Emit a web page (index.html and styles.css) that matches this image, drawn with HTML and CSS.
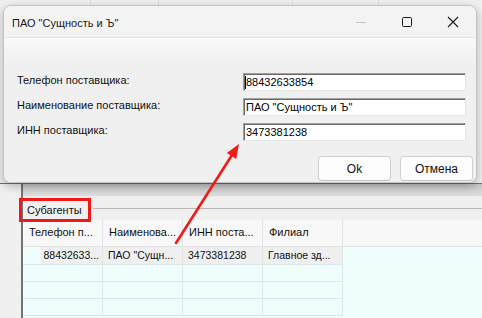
FILE: index.html
```html
<!DOCTYPE html>
<html lang="ru">
<head>
    <meta charset="UTF-8">
    <title>ПАО "Сущность и Ъ"</title>
    <link rel="stylesheet" href="styles.css">
</head>
<body>
    <div class="app">
        <div class="app-top">
            <div class="top-col w90"></div>
            <div class="top-col w67"></div>
            <div class="top-col w133"></div>
            <div class="top-col w85"></div>
            <div class="top-col rest"></div>
        </div>
        <div class="app-lower">
            <div class="side"></div>
            <div class="main">
                <div class="band"></div>
                <div class="tabs">
                    <span class="tab-caption">Субагенты</span>
                    <span class="tab-line"></span>
                </div>
                <div class="grid">
                    <div class="grid-row grid-head">
                        <div class="cell">Телефон п...</div>
                        <div class="cell">Наименова...</div>
                        <div class="cell">ИНН поста...</div>
                        <div class="cell">Филиал</div>
                        <div class="cell filler"></div>
                    </div>
                    <div class="grid-row grid-data">
                        <div class="cell num first">88432633...</div>
                        <div class="cell sel">ПАО "Сущн...</div>
                        <div class="cell sel">3473381238</div>
                        <div class="cell sel">Главное зд...</div>
                        <div class="cell filler"></div>
                    </div>
                    <div class="grid-row"><div class="cell"></div><div class="cell"></div><div class="cell"></div><div class="cell"></div><div class="cell filler"></div></div>
                    <div class="grid-row"><div class="cell"></div><div class="cell"></div><div class="cell"></div><div class="cell"></div><div class="cell filler"></div></div>
                    <div class="grid-row"><div class="cell"></div><div class="cell"></div><div class="cell"></div><div class="cell"></div><div class="cell filler"></div></div>
                </div>
            </div>
        </div>
    </div>

    <div class="dialog">
        <div class="titlebar">
            <span class="title">ПАО "Сущность и Ъ"</span>
            <div class="caption-btns">
                <span class="cap-btn">
                    <svg width="12" height="12" viewBox="0 0 12 12"><path d="M1 6.5h10" stroke="#c4c4c4" stroke-width="1"/></svg>
                </span>
                <span class="cap-btn">
                    <svg width="12" height="12" viewBox="0 0 12 12"><rect x="1.5" y="1.5" width="9" height="9" rx="1.2" fill="none" stroke="#1b1b1b" stroke-width="1"/></svg>
                </span>
                <span class="cap-btn">
                    <svg width="12" height="12" viewBox="0 0 12 12"><path d="M1 1l10 10M11 1L1 11" stroke="#1b1b1b" stroke-width="1.1"/></svg>
                </span>
            </div>
        </div>
        <div class="dialog-body">
            <div class="form">
                <label>Телефон поставщика:</label>
                <div class="field"><span class="caret"></span>88432633854</div>
                <label>Наименование поставщика:</label>
                <div class="field">ПАО "Сущность и Ъ"</div>
                <label>ИНН поставщика:</label>
                <div class="field">3473381238</div>
            </div>
            <div class="buttons">
                <button>Ok</button>
                <button>Отмена</button>
            </div>
        </div>
    </div>

    <div class="mark-box"></div>
    <svg class="arrow" width="482" height="318" viewBox="0 0 482 318">
        <line x1="176" y1="243" x2="232" y2="155" stroke="#f41a1a" stroke-width="2.6" stroke-linecap="round"/>
        <polygon points="239,144 236.2,159 226.8,153" fill="#f41a1a"/>
    </svg>
</body>
</html>
```

FILE: styles.css
```css
body {
    margin: 0;
    width: 482px;
    height: 318px;
    overflow: hidden;
    position: relative;
    background-color: #f0f0f0;
    font-family: "Liberation Sans", Arial, sans-serif;
    font-size: 11px;
    color: #111;
}
.app {
    display: flex;
    flex-direction: column;
    height: 318px;
}
.app-top {
    height: 184px;
    display: flex;
    background-color: #f0f0f0;
    border-bottom: 1px solid #6f6f6f;
    box-sizing: border-box;
}
.top-col {
    border-right: 1px solid #dedede;
}
.w90 { width: 90px; }
.w67 { width: 67px; }
.w133 { width: 133px; }
.w85 { width: 85px; }
.rest { flex: 1; border-right: none; }

.app-lower {
    flex: 1;
    display: flex;
}
.side {
    width: 21px;
    background-color: #f0f0f0;
}
.main {
    flex: 1;
    display: flex;
    flex-direction: column;
    border-left: 2px solid #747474;
}
.band {
    height: 12px;
    background: linear-gradient(#c6c6c6, #dedede);
    border-bottom: 1px solid #ececec;
}
.tabs {
    height: 23px;
    display: flex;
    align-items: center;
    padding-left: 4px;
    box-sizing: border-box;
}
.tab-caption {
    font-size: 11px;
    color: #111;
    margin-top: 2px;
}
.tab-line {
    flex: 1;
    height: 1px;
    margin-left: 11px;
    background-color: #b9b9b9;
}

/* data grid */
.grid {
    flex: 1;
    background-color: #f0fdfd;
}
.grid-row {
    display: flex;
    height: 17px;
}
.grid-row .cell {
    width: 80px;
    box-sizing: border-box;
    border-right: 1px solid #dce8e8;
    border-bottom: 1px solid #dce8e8;
    padding: 0 5px;
    font-size: 10.5px;
    line-height: 16px;
    white-space: nowrap;
    overflow: hidden;
}
.grid-row .filler {
    flex: 1;
    border: none;
}
.grid-head {
    height: 26px;
    background-color: #f8f8f8;
    border-bottom: 1px solid #e2e2e2;
}
.grid-head .cell {
    border-bottom: none;
    border-right-color: #e3e3e3;
    line-height: 25px;
    font-size: 11px;
    padding-left: 6px;
}
.grid-data {
    height: 18px;
}
.grid-data .cell {
    line-height: 17px;
}
.grid-data .sel {
    background-color: #efefef;
}
.grid-data .num {
    text-align: right;
    padding-right: 3px;
}
.grid-data .first {
    background: linear-gradient(to right, #f0fdfd 18px, #efefef 18px);
}

/* dialog window */
.dialog {
    position: absolute;
    left: 3px;
    top: 5px;
    width: 474px;
    height: 178px;
    box-sizing: border-box;
    border: 1px solid #c4c4c4;
    border-radius: 8px;
    background-color: #f0f0f0;
    box-shadow: 0 3px 10px rgba(0, 0, 0, 0.28);
    overflow: hidden;
    display: flex;
    flex-direction: column;
}
.titlebar {
    height: 31px;
    display: flex;
    align-items: center;
    background-color: #f3f3f3;
    border-bottom: 1px solid #e4e4e4;
    flex-shrink: 0;
}
.title {
    padding-left: 8px;
    font-size: 11px;
    color: #1a1a1a;
    flex: 1;
    margin-top: 2px;
}
.caption-btns {
    display: flex;
    height: 100%;
}
.cap-btn {
    width: 46px;
    display: flex;
    align-items: center;
    justify-content: center;
}
.dialog-body {
    flex: 1;
    background: linear-gradient(#fafafa, #f0f0f0 24px);
    padding: 35px 3px 0 13px;
}
.form {
    display: grid;
    grid-template-columns: 226px 223px;
    row-gap: 7px;
}
.form label {
    line-height: 14px;
    color: #111;
}
.field {
    height: 18px;
    box-sizing: border-box;
    background-color: #fff;
    border: 1px solid;
    border-color: #a0a0a0 #e6e6e6 #e6e6e6 #a0a0a0;
    box-shadow: inset 1px 1px 0 #6a6a6a;
    padding-left: 2px;
    line-height: 16px;
    color: #000;
    position: relative;
    white-space: nowrap;
}
.caret {
    position: absolute;
    left: 1px;
    top: 2px;
    width: 1px;
    height: 13px;
    background-color: #000;
}
.buttons {
    display: flex;
    justify-content: flex-end;
    gap: 9px;
    margin-top: 15px;
}
button {
    width: 73px;
    height: 25px;
    border: 1px solid #d0d0d0;
    border-bottom-color: #c0c0c0;
    border-radius: 4px;
    background-color: #fdfdfd;
    font-family: "Liberation Sans", Arial, sans-serif;
    font-size: 12px;
    color: #111;
    padding: 0;
}

/* annotations */
.mark-box {
    position: absolute;
    left: 19px;
    top: 198px;
    width: 72px;
    height: 24px;
    box-sizing: border-box;
    border: 3px solid #f01818;
}
.arrow {
    position: absolute;
    left: 0;
    top: 0;
    pointer-events: none;
}
```
